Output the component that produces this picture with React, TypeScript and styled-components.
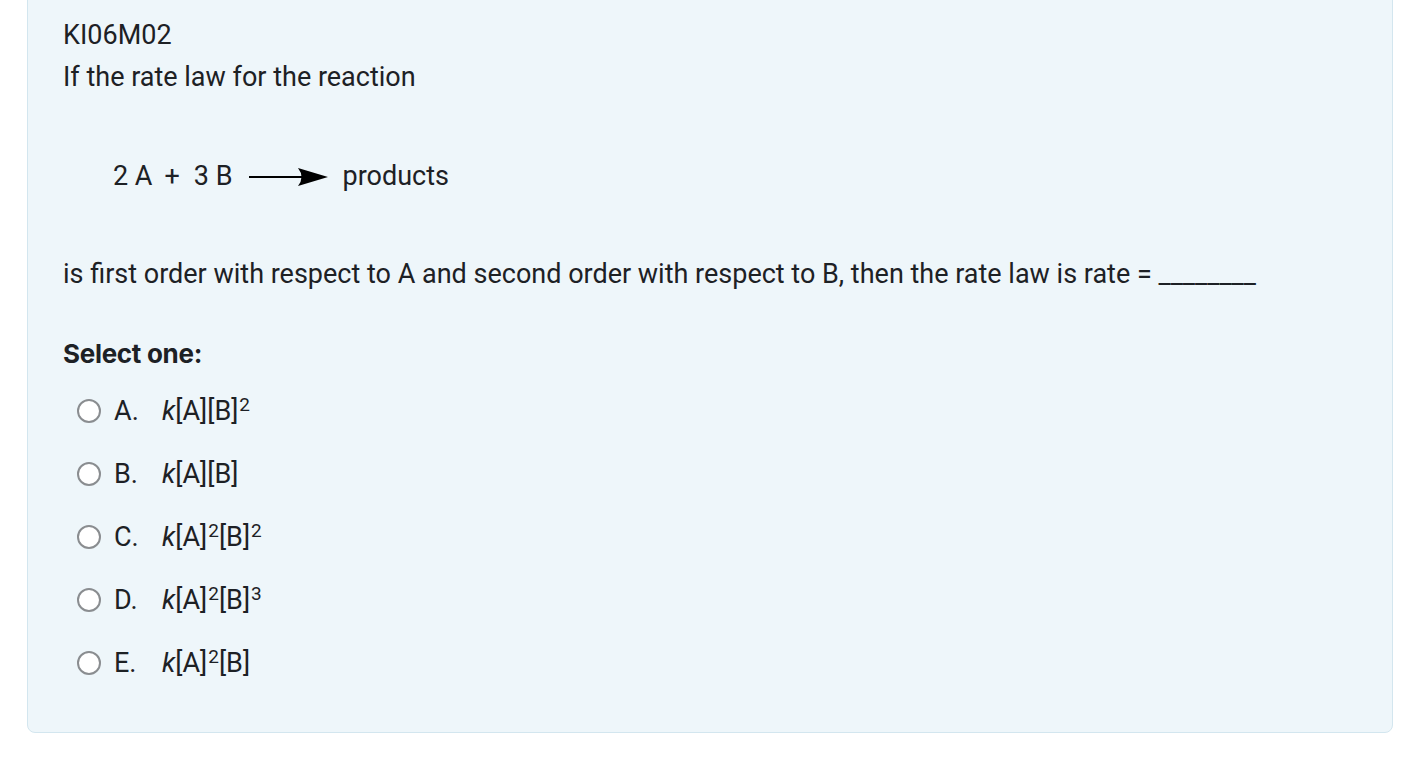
import React from 'react'
import styled, { createGlobalStyle } from 'styled-components'

const GlobalStyle = createGlobalStyle`
  body {
    margin: 0;
    background: #ffffff;
    font-family: Roboto, "Liberation Sans", sans-serif;
    color: #1d2125;
  }
`

const Card = styled.div`
  margin: -10px 0 0 27px;
  width: 1366px;
  box-sizing: border-box;
  padding: 26px 35px 38px;
  background: #eef6fa;
  border: 1px solid #d3e6ef;
  border-radius: 0 0 8px 8px;
  font-size: 27px;
  line-height: 36px;
`

const Code = styled.div`
  margin-bottom: 6px;
`

const Para = styled.p<{ $top?: number }>`
  margin: ${(p) => p.$top ?? 0}px 0 0;
`

const Equation = styled.div`
  display: flex;
  align-items: center;
  margin: 63px 0 0 50px;
  height: 36px;
`

const Term = styled.span<{ $gap?: number }>`
  margin-right: ${(p) => p.$gap ?? 0}px;
`

const Arrow = styled.svg`
  width: 80px;
  height: 20px;
  margin: 1px 14px 0 0;
`

const Prompt = styled.div`
  margin-top: 44px;
  font-family: Inter, "Noto Sans", sans-serif;
  font-weight: 700;
  font-size: 26px;
  letter-spacing: -0.3px;
`

const Options = styled.div`
  margin-top: 7px;
  padding-left: 14px;
`

const Option = styled.label`
  display: flex;
  align-items: center;
  height: 63px;
`

const Radio = styled.span`
  width: 20px;
  height: 20px;
  border: 2px solid #8a8d90;
  border-radius: 50%;
  background: #fff;
  margin-right: 13px;
`

const Letter = styled.span`
  width: 48px;
`

const Sup = styled.sup`
  font-size: 19px;
  line-height: 0;
  vertical-align: 0;
  position: relative;
  top: -9px;
  margin-left: 1px;
`

type Answer = { letter: string; a?: string; b?: string }

const answers: Answer[] = [
  { letter: 'A', b: '2' },
  { letter: 'B' },
  { letter: 'C', a: '2', b: '2' },
  { letter: 'D', a: '2', b: '3' },
  { letter: 'E', a: '2' },
]

export default function App() {
  return (
    <>
      <GlobalStyle />
      <Card>
        <Code>KI06M02</Code>
        <Para>If the rate law for the reaction</Para>
        <Equation>
          <Term $gap={12}>2 A</Term>
          <Term $gap={14}>+</Term>
          <Term $gap={16}>3 B</Term>
          <Arrow viewBox="0 0 80 20">
            <line x1="0" y1="10" x2="56" y2="10" stroke="#000" strokeWidth="2" />
            <path d="M49 1 L79 10 L49 19 Q56 10 49 1 Z" fill="#000" />
          </Arrow>
          <Term>products</Term>
        </Equation>
        <Para $top={62}>
          is first order with respect to A and second order with respect to B, then the rate law is rate
          = ________
        </Para>
        <Prompt>Select one:</Prompt>
        <Options>
          {answers.map((ans) => (
            <Option key={ans.letter}>
              <Radio />
              <Letter>{ans.letter}.</Letter>
              <span>
                <i>k</i>[A]{ans.a && <Sup>{ans.a}</Sup>}[B]{ans.b && <Sup>{ans.b}</Sup>}
              </span>
            </Option>
          ))}
        </Options>
      </Card>
    </>
  )
}
